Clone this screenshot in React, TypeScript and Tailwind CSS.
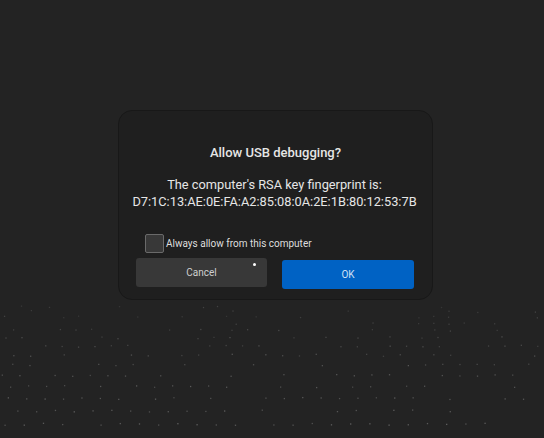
import React from "react";

// faint floor dots below the panel
const floorDots = () => {
  const dots: { x: number; y: number; o: number }[] = [];
  let seed = 7;
  const rnd = () => {
    seed = (seed * 9301 + 49297) % 233280;
    return seed / 233280;
  };
  for (let r = 0; r < 14; r++) {
    const y = 305 + r * r * 0.35 + r * 4.5;
    const step = 14 + r * 0.4;
    for (let x = rnd() * step; x < 544; x += step) {
      if (rnd() < 0.15 + r * 0.05) {
        dots.push({ x, y: y + rnd() * 2, o: 0.12 + r * 0.02 + rnd() * 0.15 });
      }
    }
  }
  return dots;
};

const App = () => {
  const dots = floorDots();
  return (
    <div
      className="relative w-[544px] h-[438px] bg-[#232323] overflow-hidden pt-[110px] pl-[118px]"
      style={{ fontFamily: "Roboto, 'Noto Sans', sans-serif" }}
    >
      <svg className="absolute left-0 top-0" width={544} height={438}>
        {dots.map((d, i) => (
          <rect key={i} x={d.x} y={d.y} width={1.3} height={1.3} fill="#9a9a9a" opacity={d.o} />
        ))}
      </svg>

      <div className="relative w-[315px] h-[190px] rounded-[14px] bg-[#1f1f1f] border border-[#181818] flex flex-col items-center">
        <p className="mt-[34px] text-[13px] leading-4 font-medium text-[#e6e6e6]">
          Allow USB debugging?
        </p>
        <div className="mt-[15px] mr-[2px] text-[12.8px] leading-[17px] text-[#e6e6e6] text-center">
          <p>The computer's RSA key fingerprint is:</p>
          <p>D7:1C:13:AE:0E:FA:A2:85:08:0A:2E:1B:80:12:53:7B</p>
        </div>

        <div className="self-start ml-[26px] mt-[24px] flex items-center gap-[2px]">
          <div className="w-[19px] h-[19px] rounded-[2px] border border-[#6a6a6a] bg-[#383838]" />
          <span className="text-[10px] text-[#dedede]">Always allow from this computer</span>
        </div>

        <div className="self-stretch ml-[17px] mr-[18px] mt-[5px] flex gap-[15px]">
          <button className="relative w-[131px] h-[29px] rounded-[3px] bg-[#383838] text-[10px] text-[#cfcfcf]">
            Cancel
            <span className="absolute right-[11px] top-[5px] w-[3px] h-[3px] rounded-full bg-white" />
          </button>
          <button className="w-[132px] h-[29px] mt-[2px] rounded-[3px] bg-[#0062c4] text-[10px] text-[#cfe0f5]">
            OK
          </button>
        </div>
      </div>
    </div>
  );
};

export default App;
